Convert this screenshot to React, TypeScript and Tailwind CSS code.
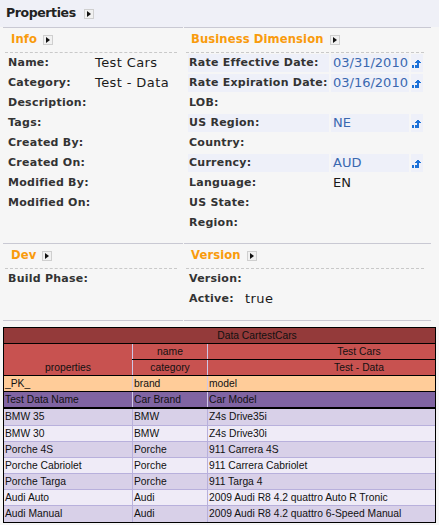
import React from "react";

type BizRow = {
  label: string;
  value?: string;
  blue?: boolean;
  hl?: boolean;
  icon?: boolean;
};

const infoRows: [string, string][] = [
  ["Name:", "Test Cars"],
  ["Category:", "Test - Data"],
  ["Description:", ""],
  ["Tags:", ""],
  ["Created By:", ""],
  ["Created On:", ""],
  ["Modified By:", ""],
  ["Modified On:", ""],
];

const bizRows: BizRow[] = [
  { label: "Rate Effective Date:", value: "03/31/2010", blue: true, hl: true, icon: true },
  { label: "Rate Expiration Date:", value: "03/16/2010", blue: true, hl: true, icon: true },
  { label: "LOB:" },
  { label: "US Region:", value: "NE", blue: true, hl: true, icon: true },
  { label: "Country:" },
  { label: "Currency:", value: "AUD", blue: true, hl: true, icon: true },
  { label: "Language:", value: "EN" },
  { label: "US State:" },
  { label: "Region:" },
];

const cars: [string, string, string][] = [
  ["BMW 35", "BMW", "Z4s Drive35i"],
  ["BMW 30", "BMW", "Z4s Drive30i"],
  ["Porche 4S", "Porche", "911 Carrera 4S"],
  ["Porche Cabriolet", "Porche", "911 Carrera Cabriolet"],
  ["Porche Targa", "Porche", "911 Targa 4"],
  ["Audi Auto", "Audi", "2009 Audi R8 4.2 quattro Auto R Tronic"],
  ["Audi Manual", "Audi", "2009 Audi R8 4.2 quattro 6-Speed Manual"],
];

function Toggle() {
  return (
    <span className="inline-flex w-[10px] h-[10px] items-center justify-center border border-[#cfcfcf] bg-[#f1f1f1]">
      <svg width="4" height="6" viewBox="0 0 4 6">
        <path d="M0 0 L4 3 L0 6 Z" fill="#111" />
      </svg>
    </span>
  );
}

function UpIcon() {
  return (
    <svg width="10" height="9" viewBox="0 0 10 9" shapeRendering="crispEdges">
      <rect x="0" y="6" width="2" height="3" fill="#1a70d8" />
      <rect x="5" y="3" width="2" height="6" fill="#1a70d8" />
      <rect x="3" y="6" width="4" height="3" fill="#1a70d8" />
      <path d="M3 3.5 L6 0 L9 3.5 Z" fill="#1a70d8" />
    </svg>
  );
}

function SectionHead({ title, pad }: { title: string; pad: string }) {
  return (
    <div
      className={`h-[25px] flex items-center gap-[6px] border-b border-dashed border-[#c9c9c9] ${pad}`}
    >
      <span className="text-[11.6px] font-bold tracking-[0.1px] text-[#f99b0c]">{title}</span>
      <Toggle />
    </div>
  );
}

export default function App() {
  return (
    <div className="w-[439px] h-[525px] overflow-hidden bg-[#f6f6f6] font-['DejaVu_Sans',sans-serif] text-[#333]">
      {/* Title */}
      <div className="h-[27px] bg-[#eff0f7] flex items-center pl-[6px] gap-[8px]">
        <span className="text-[12.5px] font-bold tracking-[-0.4px] text-[#222]">Properties</span>
        <Toggle />
      </div>

      {/* Info / Business Dimension */}
      <div className="ml-[3px] w-[428px] flex gap-[1px]">
        <div className="w-[180px] border-t border-[#c9c9d3] pl-[2px] pr-[6px]">
          <SectionHead title="Info" pad="pl-[6px]" />
          <div className="pt-[1px] flex flex-col gap-[2px]">
            {infoRows.map(([label, value]) => (
              <div key={label} className="h-[18px] flex items-center ml-[2px]">
                <div className="w-[88px] pl-[1px] text-[11px] font-bold tracking-[0.25px]">{label}</div>
                <div className="text-[13px] tracking-[0.4px] text-[#1a1a1a]">{value}</div>
              </div>
            ))}
          </div>
        </div>
        <div className="flex-1 border-t border-[#c9c9d3] pl-[2px] pr-[7px] pb-[11px]">
          <SectionHead title="Business Dimension" pad="pl-[5px]" />
          <div className="pt-[1px] flex flex-col gap-[2px]">
            {bizRows.map((r) => (
              <div key={r.label} className="h-[18px] flex gap-[2px] ml-[2px]">
                <div
                  className={`w-[141px] flex items-center pl-[1px] text-[11px] font-bold tracking-[0.25px] whitespace-nowrap ${
                    r.hl ? "bg-[#eef0f9]" : ""
                  }`}
                >
                  {r.label}
                </div>
                <div
                  className={`w-[78px] flex items-center pl-[2px] text-[13px] ${
                    r.hl ? "bg-[#eef0f9]" : ""
                  } ${r.blue ? "text-[#3a68b0]" : "text-[#1a1a1a]"}`}
                >
                  {r.value}
                </div>
                <div
                  className={`w-[12px] flex items-center justify-center ${
                    r.hl ? "bg-[#eef0f9]" : ""
                  }`}
                >
                  {r.icon && <UpIcon />}
                </div>
              </div>
            ))}
          </div>
        </div>
      </div>

      {/* Dev / Version */}
      <div className="ml-[3px] w-[428px] flex gap-[1px]">
        <div className="w-[180px] border-t border-b border-[#c9c9d3] pl-[2px] pr-[6px]">
          <SectionHead title="Dev" pad="pl-[6px]" />
          <div className="pt-[1px] flex flex-col gap-[2px]">
            <div className="h-[18px] flex items-center ml-[2px] pl-[1px] text-[11px] font-bold tracking-[0.25px]">
              Build Phase:
            </div>
          </div>
        </div>
        <div className="flex-1 border-t border-b border-[#c9c9d3] pl-[2px] pr-[7px] pb-[12px]">
          <SectionHead title="Version" pad="pl-[5px]" />
          <div className="pt-[1px] flex flex-col gap-[2px]">
            <div className="h-[18px] flex items-center ml-[2px] pl-[1px] text-[11px] font-bold tracking-[0.25px]">
              Version:
            </div>
            <div className="h-[18px] flex items-center ml-[2px]">
              <div className="w-[57px] pl-[1px] text-[11px] font-bold tracking-[0.25px]">Active:</div>
              <div className="text-[13px] tracking-[0.4px] text-[#1a1a1a]">true</div>
            </div>
          </div>
        </div>
      </div>

      {/* Data table */}
      <div className="mt-[6px] ml-[3px] w-[433px] border border-black font-['Liberation_Sans',sans-serif] text-[10.3px] text-[#111] leading-[15px]">
        <div className="h-[16px] border-b border-black bg-[#943a3a] text-center pl-[75px]">
          Data CartestCars
        </div>
        <div className="flex border-b border-black bg-[#c85250]">
          <div className="w-[128px] h-[31px] flex items-end justify-center">properties</div>
          <div className="flex-1 flex flex-col">
            <div className="h-[16px] flex border-b border-black">
              <div className="w-[75px] border-l border-[#cfc6e6] text-center">name</div>
              <div className="flex-1 border-l border-[#cfc6e6] text-center pl-[75px]">Test Cars</div>
            </div>
            <div className="h-[15px] flex">
              <div className="w-[75px] border-l border-[#cfc6e6] text-center">category</div>
              <div className="flex-1 border-l border-[#cfc6e6] text-center pl-[75px]">Test - Data</div>
            </div>
          </div>
        </div>
        <div className="h-[16px] flex border-b border-black bg-[#ffcc99]">
          <div className="w-[128px] pl-[1px]">_PK_</div>
          <div className="w-[75px] border-l border-[#cfc6e6] pl-[1px]">brand</div>
          <div className="flex-1 border-l border-[#cfc6e6] pl-[1px]">model</div>
        </div>
        <div className="h-[17px] flex border-b-2 border-black bg-[#8064a2]">
          <div className="w-[128px] pl-[1px]">Test Data Name</div>
          <div className="w-[75px] border-l border-[#cfc6e6] pl-[1px]">Car Brand</div>
          <div className="flex-1 border-l border-[#cfc6e6] pl-[1px]">Car Model</div>
        </div>
        {cars.map(([a, b, c], i) => (
          <div
            key={a}
            className={`flex ${i === 0 ? "h-[17px]" : "h-[16px]"} ${
              i < cars.length - 1 ? "border-b border-[#b8b0dc]" : ""
            } ${i % 2 === 0 ? "bg-[#d8d0e8]" : "bg-[#efebf7]"}`}
          >
            <div className="w-[128px] pl-[1px]">{a}</div>
            <div className="w-[75px] border-l border-[#b8b0dc] pl-[1px]">{b}</div>
            <div className="flex-1 border-l border-[#b8b0dc] pl-[1px]">{c}</div>
          </div>
        ))}
      </div>
    </div>
  );
}
